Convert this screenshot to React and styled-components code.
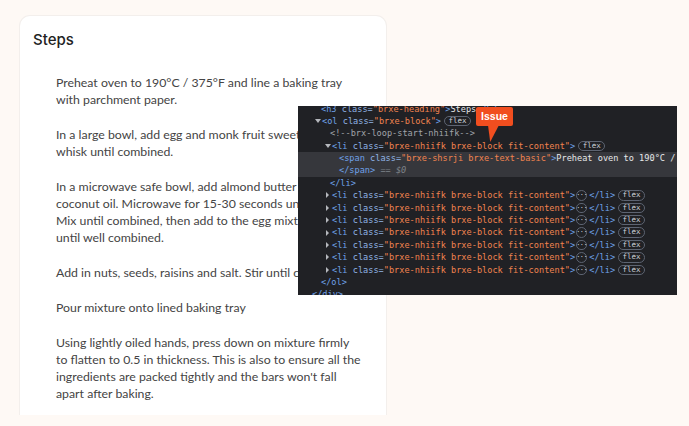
import React from "react";
import styled, { createGlobalStyle } from "styled-components";

const steps = [
  "Preheat oven to 190°C / 375°F and line a baking tray with parchment paper.",
  "In a large bowl, add egg and monk fruit sweetener and whisk until combined.",
  "In a microwave safe bowl, add almond butter and coconut oil. Microwave for 15-30 seconds until melted. Mix until combined, then add to the egg mixture and mix until well combined.",
  "Add in nuts, seeds, raisins and salt. Stir until combined.",
  "Pour mixture onto lined baking tray",
  "Using lightly oiled hands, press down on mixture firmly to flatten to 0.5 in thickness. This is also to ensure all the ingredients are packed tightly and the bars won't fall apart after baking."
];

const GlobalStyle = createGlobalStyle`
  html, body {
    margin: 0;
    height: 100%;
    background: #fef9f5;
  }
  body {
    overflow: hidden;
  }
`;

const Page = styled.div`
  position: relative;
  width: 689px;
  height: 426px;
  padding: 15px 0 0 19px;
  box-sizing: border-box;
  overflow: hidden;
`;

const Card = styled.section`
  width: 368px;
  height: 400px;
  box-sizing: border-box;
  padding: 14px 14px 0 13px;
  background: #fff;
  border: 1px solid #f3efec;
  border-bottom: 0;
  border-radius: 11px 11px 0 0;
`;

const Title = styled.h3`
  margin: 0 0 25px;
  font: 500 15px/19px "Inter", "Open Sans", sans-serif;
  color: #222;
`;

const StepList = styled.ol`
  display: flex;
  flex-direction: column;
  gap: 18px;
  margin: 0;
  padding: 0 10px 0 23px;
  list-style: none;
`;

const Step = styled.li`
  font: 400 12.3px/17px "Lato", "Open Sans", sans-serif;
  color: #444;
`;

const Inspector = styled.div`
  position: absolute;
  left: 298px;
  top: 106px;
  width: 379px;
  height: 189px;
  overflow: hidden;
  background: #202125;
  font: 400 8.6px/12.4px "DejaVu Sans Mono", "Liberation Mono", monospace;
`;

const CodeLines = styled.div`
  margin-top: -3.5px;
`;

const Row = styled.div`
  display: flex;
  align-items: center;
  height: 12.4px;
  padding-left: ${p => p.$indent}px;
  white-space: pre;
  color: #6fa1e8;
  background: ${p => (p.$selected ? "#36373c" : "transparent")};
`;

const Arrow = styled.span`
  width: 0;
  height: 0;
  flex: none;
  ${p =>
    p.$open
      ? `border-left: 3px solid transparent;
         border-right: 3px solid transparent;
         border-top: 4px solid #b5b8bd;
         margin: 0 1px 0 -1px;`
      : `border-top: 3px solid transparent;
         border-bottom: 3px solid transparent;
         border-left: 3px solid #b5b8bd;
         margin-right: 3px;`}
`;

const Attr = styled.span`
  color: #90b4e6;
`;

const Value = styled.span`
  color: #f0834f;
`;

const Plain = styled.span`
  color: #e6e7e9;
`;

const Muted = styled.span`
  color: #7e838a;
`;

const Comment = styled.span`
  color: #a0a4aa;
`;

const Badge = styled.span`
  display: inline-flex;
  align-items: center;
  justify-content: center;
  box-sizing: border-box;
  height: 10.5px;
  width: 27px;
  margin-left: 3px;
  border: 1px solid #5d6472;
  border-radius: 6px;
  color: #cdd3da;
  font-size: 7.5px;
`;

const Dots = styled(Badge)`
  width: 11px;
  margin: 0 2px 0 1px;
  font-size: 7px;
  letter-spacing: -0.5px;
`;

const Callout = styled.div`
  position: absolute;
  left: 476px;
  top: 107px;
  width: 37px;
  height: 19px;
  border-radius: 2px;
  background: #f14e1f;
  color: #fff;
  font: 700 10.5px/19px "Liberation Sans", Arial, sans-serif;
  text-align: center;

  &::after {
    content: "";
    position: absolute;
    left: 12px;
    top: 18px;
    width: 11px;
    height: 17px;
    background: #f14e1f;
    clip-path: polygon(0 0, 100% 0, 20% 100%);
  }
`;

const LiTag = () => (
  <>
    {"<li "}
    <Attr>class=</Attr>
    <Value>"brxe-nhiifk brxe-block fit-content"</Value>
    {">"}
  </>
);

const App = () => (
  <Page>
    <GlobalStyle />
    <Card>
      <Title>Steps</Title>
      <StepList>
        {steps.map(text => (
          <Step key={text}>{text}</Step>
        ))}
      </StepList>
    </Card>

    <Inspector>
      <CodeLines>
        <Row $indent={23}>
          {"<h3 "}
          <Attr>class=</Attr>
          <Value>"brxe-heading"</Value>
          {">"}
          <Plain>Steps</Plain>
          {"</h3>"}
        </Row>
        <Row $indent={18}>
          <Arrow $open />
          {"<ol "}
          <Attr>class=</Attr>
          <Value>"brxe-block"</Value>
          {">"}
          <Badge>flex</Badge>
        </Row>
        <Row $indent={32}>
          <Comment>{"<!--brx-loop-start-nhiifk-->"}</Comment>
        </Row>
        <Row $indent={28}>
          <Arrow $open />
          <LiTag />
          <Badge>flex</Badge>
        </Row>
        <Row $indent={41} $selected>
          {"<span "}
          <Attr>class=</Attr>
          <Value>"brxe-shsrji brxe-text-basic"</Value>
          {">"}
          <Plain>Preheat oven to 190°C / 375°F and line a baking tray</Plain>
        </Row>
        <Row $indent={41} $selected>
          {"</span>"}
          <Muted> == </Muted>
          <Muted>
            <i>$0</i>
          </Muted>
        </Row>
        <Row $indent={32}>{"</li>"}</Row>
        {[0, 1, 2, 3, 4, 5, 6].map(i => (
          <Row key={i} $indent={28}>
            <Arrow />
            <LiTag />
            <Dots>···</Dots>
            {"</li>"}
            <Badge>flex</Badge>
          </Row>
        ))}
        <Row $indent={23}>{"</ol>"}</Row>
        <Row $indent={14}>{"</div>"}</Row>
      </CodeLines>
    </Inspector>

    <Callout>Issue</Callout>
  </Page>
);

export default App;
